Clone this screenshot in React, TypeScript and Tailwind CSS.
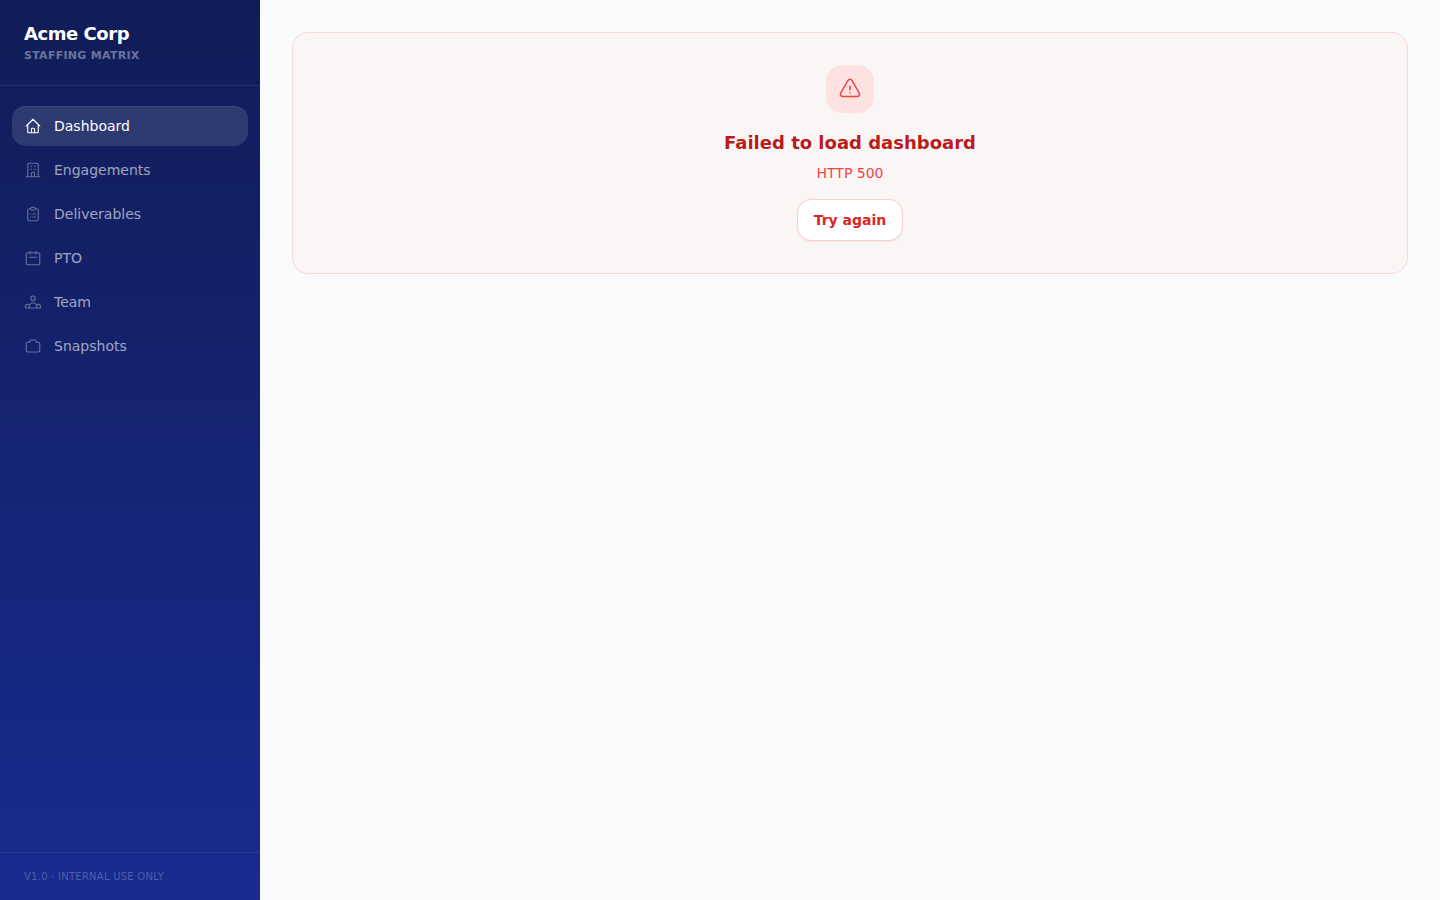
interface NavItem {
  label: string
  icon: string
}

const navItems: NavItem[] = [
  {
    label: "Dashboard",
    icon: "M3 12l2-2m0 0l7-7 7 7M5 10v10a1 1 0 001 1h3m10-11l2 2m-2-2v10a1 1 0 01-1 1h-3m-6 0a1 1 0 001-1v-4a1 1 0 011-1h2a1 1 0 011 1v4a1 1 0 001 1m-6 0h6",
  },
  {
    label: "Engagements",
    icon: "M19 21V5a2 2 0 00-2-2H7a2 2 0 00-2 2v16m14 0h2m-2 0h-5m-9 0H3m2 0h5M9 7h1m-1 4h1m4-4h1m-1 4h1m-5 10v-5a1 1 0 011-1h2a1 1 0 011 1v5m-4 0h4",
  },
  {
    label: "Deliverables",
    icon: "M9 5H7a2 2 0 00-2 2v12a2 2 0 002 2h10a2 2 0 002-2V7a2 2 0 00-2-2h-2M9 5a2 2 0 002 2h2a2 2 0 002-2M9 5a2 2 0 012-2h2a2 2 0 012 2m-3 7h3m-3 4h3m-6-4h.01M9 16h.01",
  },
  {
    label: "PTO",
    icon: "M8 7V3m8 4V3m-9 8h10M5 21h14a2 2 0 002-2V7a2 2 0 00-2-2H5a2 2 0 00-2 2v12a2 2 0 002 2z",
  },
  {
    label: "Team",
    icon: "M17 20h5v-2a3 3 0 00-5.356-1.857M17 20H7m10 0v-2c0-.656-.126-1.283-.356-1.857M7 20H2v-2a3 3 0 015.356-1.857M7 20v-2c0-.656.126-1.283.356-1.857m0 0a5.002 5.002 0 019.288 0M15 7a3 3 0 11-6 0 3 3 0 016 0z",
  },
  {
    label: "Snapshots",
    icon: "M3 9a2 2 0 012-2h.93a2 2 0 001.664-.89l.812-1.22A2 2 0 0110.07 4h3.86a2 2 0 011.664.89l.812 1.22A2 2 0 0018.07 7H19a2 2 0 012 2v9a2 2 0 01-2 2H5a2 2 0 01-2-2V9z",
  },
]

function NavLink({ label, icon, active }: NavItem & { active: boolean }) {
  return (
    <a
      href="#"
      aria-current={active ? "page" : undefined}
      className={
        active
          ? "flex items-center gap-3 rounded-[14px] bg-white/12 px-3 py-2.5 text-sm text-white shadow-[inset_0_1px_0_rgba(255,255,255,0.08)]"
          : "flex items-center gap-3 rounded-[14px] px-3 py-2.5 text-sm text-white/60"
      }
    >
      <svg
        viewBox="0 0 24 24"
        fill="none"
        stroke="currentColor"
        strokeWidth="1.5"
        strokeLinecap="round"
        strokeLinejoin="round"
        aria-hidden="true"
        className={active ? "size-[18px] shrink-0" : "size-[18px] shrink-0 opacity-60"}
      >
        <path d={icon} />
      </svg>
      {label}
    </a>
  )
}

function Sidebar() {
  return (
    <aside className="flex w-[260px] shrink-0 flex-col bg-linear-to-b from-[#111c57] to-[#182b8f] text-white">
      <div className="border-b border-white/8 px-6 pt-6 pb-[22px]">
        <h1 className="text-lg leading-5 font-bold tracking-tight">Acme Corp</h1>
        <p className="mt-1 text-[11px] leading-[15px] font-semibold tracking-wide text-white/40 uppercase">
          Staffing Matrix
        </p>
      </div>
      <nav className="flex flex-1 flex-col gap-1 px-3 py-5">
        {navItems.map((item) => (
          <NavLink key={item.label} {...item} active={item.label === "Dashboard"} />
        ))}
      </nav>
      <div className="border-t border-white/6 px-6 py-4">
        <p className="text-[10px] leading-[15px] tracking-wide text-white/25 uppercase">v1.0 · Internal use only</p>
      </div>
    </aside>
  )
}

function ErrorCard({ title, message }: { title: string; message: string }) {
  return (
    <section
      role="alert"
      className="flex flex-col items-center rounded-2xl border border-[#fbd9d9] bg-[#fbf6f6] p-8 text-center"
    >
      <div className="mb-4 flex size-12 items-center justify-center rounded-2xl bg-[#fee2e2] text-[#ef4444]">
        <svg
          viewBox="0 0 24 24"
          fill="none"
          stroke="currentColor"
          strokeWidth="1.5"
          strokeLinecap="round"
          strokeLinejoin="round"
          aria-hidden="true"
          className="size-6"
        >
          <path d="M12 9v3.75m-9.303 3.376c-.866 1.5.217 3.374 1.948 3.374h14.71c1.73 0 2.813-1.874 1.948-3.374L13.949 3.378c-.866-1.5-3.032-1.5-3.898 0L2.697 16.126zM12 15.75h.007v.008H12v-.008z" />
        </svg>
      </div>
      <h2 className="text-lg leading-7 font-bold text-[#b91c1c]">{title}</h2>
      <p className="mt-1.5 text-sm text-[#ef4444]">{message}</p>
      <button
        type="button"
        className="mt-4 rounded-[14px] border border-[#fecaca] bg-white px-4 py-2.5 text-sm font-semibold text-[#dc2626] shadow-xs"
      >
        Try again
      </button>
    </section>
  )
}

export default function App() {
  return (
    <div className="flex min-h-screen bg-[#f9fafc] font-['DejaVu_Sans',sans-serif]">
      <Sidebar />
      <main className="min-w-0 flex-1 p-8">
        <ErrorCard title="Failed to load dashboard" message="HTTP 500" />
      </main>
    </div>
  )
}
